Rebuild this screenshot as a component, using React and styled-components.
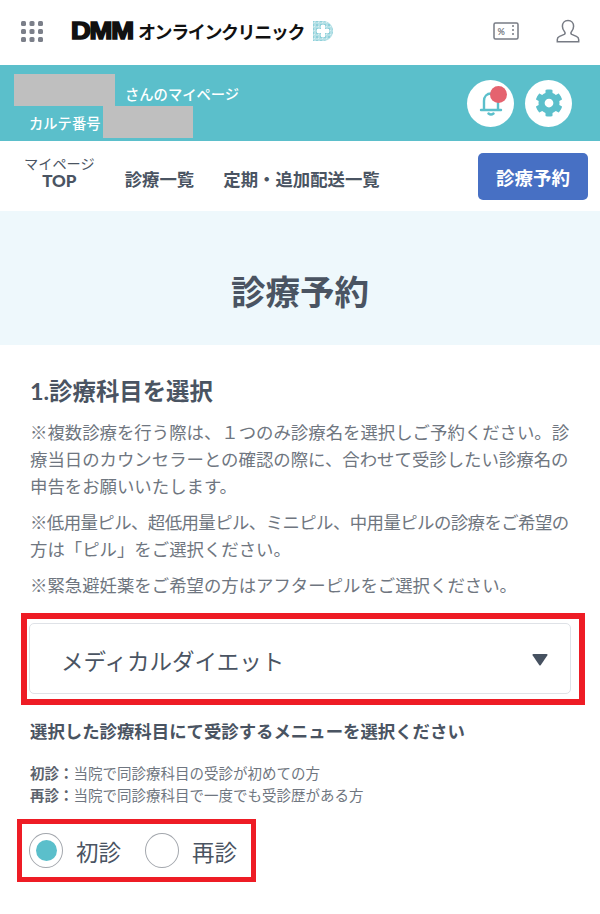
import styled, { createGlobalStyle } from "styled-components";
import { FaCog } from "react-icons/fa";

const GlobalStyle = createGlobalStyle`
  html, body { margin: 0; padding: 0; background: #fff; }
  body { font-family: "Lato", "Noto Sans CJK JP", sans-serif; color: #4a5462; }
  * { box-sizing: border-box; }
`;

function GridIcon() {
  const dots = [];
  for (let y = 0; y < 3; y++) {
    for (let x = 0; x < 3; x++) {
      dots.push(<rect key={`${x}-${y}`} x={x * 8.5} y={y * 8} width="5" height="5" rx="1.5" fill="#7b7f89" />);
    }
  }
  return <svg width="22" height="21" viewBox="0 0 22 21">{dots}</svg>;
}

function ClinicMark() {
  return (
    <svg width="22" height="22" viewBox="0 0 22 22">
      <defs>
        <pattern id="speckle" width="4" height="4" patternUnits="userSpaceOnUse">
          <rect width="4" height="4" fill="#b4e0e6" />
          <rect width="2" height="2" fill="#8fd0da" />
          <rect x="2" y="2" width="1" height="1" fill="#d6eff2" />
        </pattern>
      </defs>
      <path d="M1 1h10c6 0 10 4.500 10 10s-4 10-10 10H1z" fill="url(#speckle)" />
      <path d="M9 5h4v4h4v4h-4v4H9v-4H5V9h4z" fill="#fff" />
    </svg>
  );
}

function CouponIcon() {
  return (
    <svg width="27" height="20" viewBox="0 0 27 20" fill="none">
      <rect x="1" y="2" width="24" height="16" rx="1.500" stroke="#777b84" strokeWidth="1.500" />
      <path d="M20 4v12" stroke="#777b84" strokeWidth="1.500" strokeDasharray="2 2" />
      <text x="4.500" y="14" fontSize="9" fontWeight="700" fill="#777b84" fontFamily="Lato">%</text>
    </svg>
  );
}

function UserIcon() {
  return (
    <svg width="24" height="25" viewBox="0 0 24 25" fill="none">
      <path
        d="M12 1.500c-3.600 0-5.600 2.600-5.600 5.800 0 2.500 1.200 4.400 2.300 5.600.7.800.5 2-.5 2.500l-4.600 2c-1.500.7-2.300 1.600-2.300 3.100v2.200h21.400v-2.200c0-1.500-.8-2.400-2.300-3.100l-4.600-2c-1-.5-1.200-1.700-.5-2.500 1.100-1.200 2.300-3.100 2.300-5.600 0-3.200-2-5.800-5.600-5.800z"
        stroke="#777b84"
        strokeWidth="1.500"
      />
    </svg>
  );
}

function BellIcon() {
  return (
    <svg width="24" height="28" viewBox="0 0 24 28" fill="none" stroke="#5bbfcb" strokeWidth="2.400">
      <path d="M5 20V12c0-4.500 3-7.500 7-7.500s7 3 7 7.500v8" />
      <path d="M2 21h20" strokeLinecap="round" />
      <path d="M9.500 24.500c1.500 1.300 3.500 1.300 5 0" strokeLinecap="round" />
    </svg>
  );
}

export default function App() {
  return (
    <Page>
      <GlobalStyle />
      <Header>
        <GridIcon />
        <Logo>
          <LogoDmm>DMM</LogoDmm>
          <LogoName>オンラインクリニック</LogoName>
          <ClinicMark />
        </Logo>
        <HeaderIcons>
          <CouponIcon />
          <UserIcon />
        </HeaderIcons>
      </Header>

      <Band>
        <BandText>
          <NameRow>
            <Redacted $width={101} $height={32} />
            <span>さんのマイページ</span>
          </NameRow>
          <ChartRow>
            <span>カルテ番号</span>
            <Redacted $width={90} $height={32} />
          </ChartRow>
        </BandText>
        <RoundButtons>
          <RoundButton>
            <BellIcon />
            <Badge />
          </RoundButton>
          <RoundButton>
            <FaCog size={28} color="#5bbfcb" />
          </RoundButton>
        </RoundButtons>
      </Band>

      <Nav>
        <TopLink>
          <small>マイページ</small>
          <b>TOP</b>
        </TopLink>
        <NavLink>診療一覧</NavLink>
        <NavLink>定期・追加配送一覧</NavLink>
        <ReserveButton>診療予約</ReserveButton>
      </Nav>

      <Hero>
        <h1>診療予約</h1>
      </Hero>

      <Content>
        <StepTitle>1.診療科目を選択</StepTitle>
        <Note>
          ※複数診療を行う際は、１つのみ診療名を選択しご予約ください。診療当日のカウンセラーとの確認の際に、合わせて受診したい診療名の申告をお願いいたします。
        </Note>
        <Note>
          <TightLine>※低用量ピル、超低用量ピル、ミニピル、中用量ピルの診療をご希望の</TightLine>
          方は「ピル」をご選択ください。
        </Note>
        <Note>※緊急避妊薬をご希望の方はアフターピルをご選択ください。</Note>

        <SelectFrame>
          <Select>
            <span>メディカルダイエット</span>
            <svg width="16" height="13" viewBox="0 0 16 13">
              <path d="M1.500 1h13a1 1 0 0 1 .8 1.500l-6.500 9.500a1 1 0 0 1-1.600 0L.7 2.500A1 1 0 0 1 1.500 1z" fill="#465160" />
            </svg>
          </Select>
        </SelectFrame>

        <MenuTitle>選択した診療科目にて受診するメニューを選択ください</MenuTitle>
        <Legend>
          <div><b>初診：</b>当院で同診療科目の受診が初めての方</div>
          <div><b>再診：</b>当院で同診療科目で一度でも受診歴がある方</div>
        </Legend>

        <RadioFrame>
          <Radio>
            <RadioMark $checked />
            初診
          </Radio>
          <Radio>
            <RadioMark />
            再診
          </Radio>
        </RadioFrame>
      </Content>
    </Page>
  );
}

const Page = styled.div`
  width: 600px;
  height: 914px;
  overflow: hidden;
  background: #fff;
`;

const Header = styled.header`
  display: flex;
  align-items: center;
  height: 65px;
  padding: 0 20px 3px 21px;
`;

const Logo = styled.div`
  display: flex;
  align-items: center;
  margin-left: 28px;
  color: #111;
`;

const LogoDmm = styled.span`
  font-family: "Liberation Sans", sans-serif;
  font-size: 24px;
  font-weight: 700;
  letter-spacing: -1px;
  -webkit-text-stroke: 1.600px #111;
  transform: scaleX(1.140);
  transform-origin: left;
  width: 67px;
`;

const LogoName = styled.span`
  font-family: "Noto Sans CJK JP", sans-serif;
  font-size: 18px;
  font-weight: 700;
  letter-spacing: -1.400px;
  margin-right: 8px;
`;

const HeaderIcons = styled.div`
  display: flex;
  align-items: center;
  gap: 36px;
  margin-left: auto;
`;

const Band = styled.section`
  display: flex;
  align-items: center;
  justify-content: space-between;
  height: 76px;
  padding: 0 28px 0 14px;
  background: #5bbfcb;
  color: #fff;
  font-size: 14.300px;
  font-weight: 500;
`;

const BandText = styled.div`
  display: flex;
  flex-direction: column;
  padding-top: 6px;
`;

const NameRow = styled.div`
  display: flex;
  align-items: center;
  gap: 10px;

  span {
    padding-top: 7px;
  }
`;

const ChartRow = styled.div`
  display: flex;
  align-items: center;
  gap: 3px;
  padding-left: 15px;
`;

const Redacted = styled.div`
  width: ${(p) => p.$width}px;
  height: ${(p) => p.$height}px;
  background: #bfbfbf;
`;

const RoundButtons = styled.div`
  display: flex;
  gap: 11px;
`;

const RoundButton = styled.div`
  position: relative;
  display: flex;
  align-items: center;
  justify-content: center;
  width: 47px;
  height: 47px;
  border-radius: 50%;
  background: #fff;
`;

const Badge = styled.span`
  position: absolute;
  top: 6px;
  right: 7px;
  width: 17px;
  height: 17px;
  border-radius: 50%;
  background: #e5636f;
`;

const Nav = styled.nav`
  display: flex;
  align-items: flex-end;
  height: 70px;
  padding: 0 12px 21px 24px;
  font-size: 17.400px;
  font-weight: 700;
  color: #4a5462;
`;

const TopLink = styled.div`
  display: flex;
  flex-direction: column;
  align-items: center;
  line-height: 18px;
  margin-right: 30px;

  small {
    font-size: 14.200px;
    font-weight: 400;
    line-height: 16px;
  }

  b {
    font-size: 17px;
  }
`;

const NavLink = styled.div`
  line-height: 20px;
  margin-right: 29px;
`;

const ReserveButton = styled.div`
  display: flex;
  align-items: center;
  justify-content: center;
  width: 110px;
  height: 47px;
  margin: 0 0 -10px auto;
  border-radius: 5px;
  background: #4770c4;
  color: #fff;
  font-size: 18.500px;
`;

const Hero = styled.section`
  display: flex;
  align-items: center;
  justify-content: center;
  height: 134px;
  padding-top: 24px;
  background: #eef8fc;

  h1 {
    margin: 0;
    font-size: 34.500px;
    font-weight: 700;
    color: #4a5462;
  }
`;

const Content = styled.main`
  padding: 31px 29px 0 30px;
`;

const StepTitle = styled.h2`
  margin: -1px 0 12px;
  font-size: 23.400px;
  font-weight: 700;
  line-height: 32px;
  color: #4a5462;
`;

const Note = styled.p`
  margin: 0 0 9px;
  font-size: 17.400px;
  line-height: 27px;
  color: #6f7680;
`;

const TightLine = styled.span`
  display: block;
  letter-spacing: -0.560px;
  white-space: nowrap;
`;

const SelectFrame = styled.div`
  margin: 14px -14px 0 -9px;
  border: 6px solid #ee1c25;
  padding: 4px 8px 5px 2px;
`;

const Select = styled.div`
  display: flex;
  align-items: center;
  justify-content: space-between;
  height: 71px;
  padding: 2px 22px 0 31px;
  border: 1px solid #dfe2e7;
  border-radius: 5px;
  font-size: 22.500px;
  color: #4a5462;
`;

const MenuTitle = styled.h3`
  margin: 15px 0 0;
  font-size: 17.400px;
  font-weight: 700;
  line-height: 24px;
  color: #4a5462;
`;

const Legend = styled.div`
  margin-top: 19px;
  font-size: 14.500px;
  line-height: 22px;
  color: #6f7680;

  b {
    color: #5c636d;
  }
`;

const RadioFrame = styled.div`
  display: flex;
  align-items: center;
  gap: 24px;
  width: fit-content;
  height: 63px;
  margin: 12px 0 0 -13px;
  padding: 0 14px 0 7px;
  border: 5px solid #ee1c25;
`;

const Radio = styled.label`
  display: flex;
  align-items: center;
  gap: 13px;
  font-size: 22.500px;
  color: #4a5462;
`;

const RadioMark = styled.span`
  display: flex;
  align-items: center;
  justify-content: center;
  width: 34px;
  height: 35px;
  border: 1.500px solid #a3a7ad;
  border-radius: 50%;

  &::after {
    content: "";
    display: ${(p) => (p.$checked ? "block" : "none")};
    width: 21px;
    height: 21px;
    border-radius: 50%;
    background: #5bbfcb;
  }
`;
